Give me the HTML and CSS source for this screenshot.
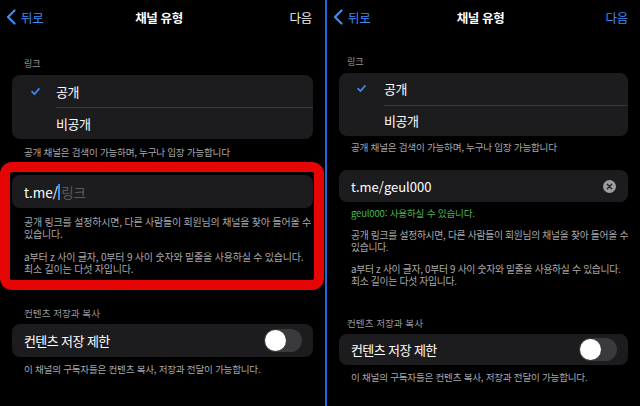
FILE: index.html
```html
<!doctype html>
<html lang="ko">
  <head>
    <meta charset="utf-8">
    <title>채널 유형</title>
    <link rel="stylesheet" href="styles.css">
  </head>

  <body>
    <div class="screens">

      <!-- 왼쪽 화면: 링크 입력 전 -->
      <section class="screen screen-before">
        <header class="nav">
          <a class="nav-back">
            <svg class="chevron" viewBox="0 0 10 16"><path d="M8.5 1.5 L2 8 L8.5 14.5"/></svg>
            뒤로
          </a>
          <h1 class="nav-title">채널 유형</h1>
          <span class="nav-next">다음</span>
        </header>

        <div class="section-label">링크</div>
        <ul class="group">
          <li class="row">
            <span class="check"><svg viewBox="0 0 10 8"><path d="M1 4.2 L3.8 7 L9 1"/></svg></span>
            <span class="row-text">공개</span>
          </li>
          <li class="row">
            <span class="check"></span>
            <span class="row-text">비공개</span>
          </li>
        </ul>
        <p class="section-footer">공개 채널은 검색이 가능하며, 누구나 입장 가능합니다</p>

        <div class="link-block">
          <div class="input-card">
            <span>t.me/</span><span class="caret"></span><span class="placeholder">링크</span>
          </div>
          <p class="help">공개 링크를 설정하시면, 다른 사람들이 회원님의 채널을 찾아 들어올 수<br>있습니다.</p>
          <p class="help">a부터 z 사이 글자, 0부터 9 사이 숫자와 밑줄을 사용하실 수 있습니다.<br>최소 길이는 다섯 자입니다.</p>
          <div class="highlight"></div>   <!-- 빨간 강조 테두리 -->
        </div>

        <div class="section-label label-content">컨텐츠 저장과 복사</div>
        <div class="group">
          <div class="row row-switch">
            <span class="switch-text">컨텐츠 저장 제한</span>
            <span class="switch"><span class="knob"></span></span>
          </div>
        </div>
        <p class="section-footer footer-content">이 채널의 구독자들은 컨텐츠 복사, 저장과 전달이 가능합니다.</p>
      </section>

      <div class="divider"></div>

      <!-- 오른쪽 화면: 링크 입력 후 -->
      <section class="screen screen-after">
        <header class="nav">
          <a class="nav-back">
            <svg class="chevron" viewBox="0 0 10 16"><path d="M8.5 1.5 L2 8 L8.5 14.5"/></svg>
            뒤로
          </a>
          <h1 class="nav-title">채널 유형</h1>
          <span class="nav-next active">다음</span>
        </header>

        <div class="section-label">링크</div>
        <ul class="group">
          <li class="row">
            <span class="check"><svg viewBox="0 0 10 8"><path d="M1 4.2 L3.8 7 L9 1"/></svg></span>
            <span class="row-text">공개</span>
          </li>
          <li class="row">
            <span class="check"></span>
            <span class="row-text">비공개</span>
          </li>
        </ul>
        <p class="section-footer">공개 채널은 검색이 가능하며, 누구나 입장 가능합니다</p>

        <div class="link-block">
          <div class="input-card">
            <span class="input-value">t.me/geul000</span>
            <span class="clear">
              <svg viewBox="0 0 14 14"><circle cx="7" cy="7" r="7"/><path d="M4.6 4.6 L9.4 9.4 M9.4 4.6 L4.6 9.4"/></svg>
            </span>
          </div>
          <p class="status">geul000: 사용하실 수 있습니다.</p>
          <p class="help">공개 링크를 설정하시면, 다른 사람들이 회원님의 채널을 찾아 들어올 수<br>있습니다.</p>
          <p class="help">a부터 z 사이 글자, 0부터 9 사이 숫자와 밑줄을 사용하실 수 있습니다.<br>최소 길이는 다섯 자입니다.</p>
        </div>

        <div class="section-label label-content">컨텐츠 저장과 복사</div>
        <div class="group">
          <div class="row row-switch">
            <span class="switch-text">컨텐츠 저장 제한</span>
            <span class="switch"><span class="knob"></span></span>
          </div>
        </div>
        <p class="section-footer footer-content">이 채널의 구독자들은 컨텐츠 복사, 저장과 전달이 가능합니다.</p>
      </section>

    </div>
  </body>
</html>
```

FILE: styles.css
```css
body {
  margin: 0;
  background-color: #000;
  color: #fff;
  font-family: "Noto Sans CJK KR", "Noto Sans", sans-serif;
}
p, ul, h1 {
  margin: 0;
  padding: 0;
}
.screens {
  display: flex;
  width: 640px;
  height: 406px;
  overflow: hidden;
}
.screen-before {
  width: 325px;
}
.screen-after {
  flex: 1;
  min-width: 0;
}
.divider {
  width: 2px;
  background-color: #1f68dc;
}
/* 상단 내비게이션 */
.nav {
  display: grid;
  grid-template-columns: 1fr auto 1fr;
  align-items: center;
  height: 34px;
  padding: 0 13px 0 6px;
}
.screen-after .nav {
  padding-right: 12px;
}
.nav-back {
  display: flex;
  align-items: center;
  gap: 5px;
  color: #3f8cf4;
  font-size: 12.5px;
  letter-spacing: -0.3px;
}
.chevron {
  width: 10px;
  height: 16px;
  fill: none;
  stroke: #3f8cf4;
  stroke-width: 2.2;
  stroke-linecap: round;
  stroke-linejoin: round;
}
.nav-title {
  font-size: 12.5px;
  font-weight: 700;
  letter-spacing: -0.4px;
}
.nav-next {
  justify-self: end;
  font-size: 12.5px;
  letter-spacing: -0.3px;
  color: #ececec;
}
.nav-next.active {
  color: #3f8cf4;
}
/* 섹션 제목과 설명 */
.section-label {
  margin-top: 23px;
  padding-left: 24px;
  font-size: 9px;
  line-height: 14px;
  color: #98989e;
}
.section-footer {
  margin-top: 6px;
  padding-left: 24px;
  font-size: 9.6px;
  line-height: 14px;
  letter-spacing: -0.25px;
  color: #a8a8ad;
  white-space: nowrap;
}
.label-content {
  margin-top: 31px;
  font-size: 9.6px;
}
.footer-content {
  margin-top: 5px;
}
/* 그룹 카드 */
.group {
  list-style: none;
  margin: 4px 12px 0;
  border-radius: 8px;
  background-color: #1c1c1e;
  overflow: hidden;
}
.row {
  display: flex;
  align-items: stretch;
  height: 32px;
}
.check {
  display: flex;
  align-items: center;
  width: 25px;
  padding-left: 19px;
}
.check svg {
  width: 9px;
  height: 7px;
  fill: none;
  stroke: #3f8cf4;
  stroke-width: 1.8;
  stroke-linecap: round;
  stroke-linejoin: round;
}
.row-text {
  flex: 1;
  display: flex;
  align-items: center;
  font-size: 13px;
  letter-spacing: -0.4px;
}
.row + .row .row-text {
  border-top: 1px solid #38383a;
}
.row-switch {
  align-items: center;
  justify-content: space-between;
  height: 33px;
  padding: 0 11px 0 12px;
}
.switch-text {
  font-size: 13px;
  letter-spacing: -0.6px;
}
/* 토글 스위치 (꺼짐) */
.switch {
  display: flex;
  align-items: center;
  width: 38px;
  height: 23px;
  padding: 0 1px;
  box-sizing: border-box;
  border-radius: 12px;
  background-color: #3a3a3c;
}
.knob {
  width: 21px;
  height: 21px;
  border-radius: 50%;
  background-color: #fff;
}
/* 링크 입력 */
.link-block {
  position: relative;
  margin: 16px 12px 0;
}
.input-card {
  display: flex;
  align-items: center;
  height: 33px;
  padding: 0 12px;
  border-radius: 8px;
  background-color: #1c1c1e;
  font-size: 13.5px;
}
.caret {
  width: 2px;
  height: 16px;
  margin: 0 1px 0 0;
  background-color: #3f8cf4;
}
.placeholder {
  color: #5b5b60;
}
.input-value {
  flex: 1;
  font-size: 13px;
}
.clear svg {
  display: block;
  width: 13px;
  height: 13px;
}
.clear circle {
  fill: #9d9da2;
}
.clear path {
  stroke: #26262a;
  stroke-width: 1.5;
  stroke-linecap: round;
}
.help {
  margin-top: 11px;
  padding-left: 12px;
  font-size: 10px;
  line-height: 12px;
  letter-spacing: -0.2px;
  color: #a8a8ad;
  white-space: nowrap;
}
.input-card + .help {
  margin-top: 8px;
}
.status {
  margin-top: 5px;
  padding-left: 12px;
  font-size: 9.6px;
  line-height: 12px;
  letter-spacing: -0.2px;
  color: #45b94d;
}
/* 빨간 강조 표시 (겹쳐 그림) */
.highlight {
  position: absolute;
  top: -13px;
  left: -12px;
  right: -11px;
  bottom: -15px;
  border: 10px solid #e60505;
  border-radius: 12px;
}
/* 오른쪽 화면 간격 보정 */
.screen-after .section-label {
  margin-top: 21px;
  padding-left: 20px;
}
.screen-after .section-footer {
  margin-top: 4px;
}
.screen-after .row {
  height: 31.5px;
}
.screen-after .check {
  padding-left: 18px;
  width: 27px;
}
.screen-after .input-card {
  height: 32px;
}
.screen-after .help {
  font-size: 9.8px;
  letter-spacing: -0.3px;
  line-height: 12px;
  margin-top: 10px;
}
.screen-after .label-content {
  margin-top: 29px;
}
.screen-after .row-switch {
  height: 31px;
}
.screen-after .footer-content {
  margin-top: 5px;
}
```
